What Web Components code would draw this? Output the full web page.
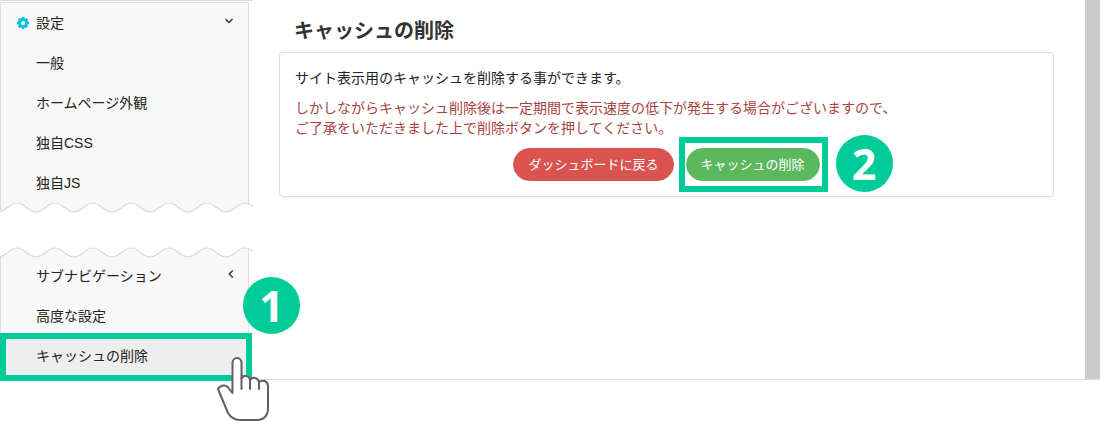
<!DOCTYPE html>
<html lang="ja">
<head>
<meta charset="utf-8">
<meta name="viewport" content="width=device-width, initial-scale=1">
<title>キャッシュの削除</title>
<style>
  body {
    box-sizing: border-box;
    min-height: 100vh;
    margin: 0;
    padding-bottom: 40px;
    background: #fff;
    color: #222;
    font: 14px/20px "Liberation Sans", "Noto Sans CJK JP", sans-serif;
  }
</style>
</head>
<body>
<admin-page>
  <side-nav slot="nav">
    <nav-group edge="bottom">
      <nav-item icon="gear" arrow="down">設定</nav-item>
      <nav-item>一般</nav-item>
      <nav-item>ホームページ外観</nav-item>
      <nav-item>独自CSS</nav-item>
      <nav-item>独自JS</nav-item>
    </nav-group>
    <nav-group edge="top">
      <nav-item arrow="left">サブナビゲーション</nav-item>
      <nav-item>高度な設定</nav-item>
      <nav-item active>キャッシュの削除<step-badge slot="mark">1</step-badge><hand-pointer slot="mark"></hand-pointer></nav-item>
    </nav-group>
  </side-nav>
  <cache-panel heading="キャッシュの削除">
    <span slot="lead">サイト表示用のキャッシュを削除する事ができます。</span>
    <span slot="warning">しかしながらキャッシュ削除後は一定期間で表示速度の低下が発生する場合がございますので、<br>ご了承をいただきました上で削除ボタンを押してください。</span>
    <pill-button slot="actions" kind="danger">ダッシュボードに戻る</pill-button>
    <pill-button slot="actions" kind="success" marked>キャッシュの削除<step-badge slot="mark">2</step-badge></pill-button>
  </cache-panel>
</admin-page>

<script>
class AdminPage extends HTMLElement {
  connectedCallback() {
    const shadowRoot = this.attachShadow({ mode: "open" });

    shadowRoot.innerHTML = `
    <style>
      :host {
        display: flex;
        border-bottom: 1px solid #ddd;
      }
      main {
        flex: 1;
        min-width: 0;
        padding: 21px 31px 20px 26px;
      }
      .scrollbar {
        flex: none;
        width: 15px;
        background: #ccc;
      }
    </style>
    <slot name="nav"></slot>
    <main><slot></slot></main>
    <div class="scrollbar"></div>
    `;
  }
}

customElements.define("admin-page", AdminPage);

class SideNav extends HTMLElement {
  connectedCallback() {
    const shadowRoot = this.attachShadow({ mode: "open" });

    shadowRoot.innerHTML = `
    <style>
      :host {
        display: block;
        flex: none;
        width: 253px;
      }
      nav {
        display: flex;
        flex-direction: column;
        gap: 32px;
        padding-bottom: 3px;
        border-top: 1px solid #ddd;
      }
    </style>
    <nav><slot></slot></nav>
    `;
  }
}

customElements.define("side-nav", SideNav);

class NavGroup extends HTMLElement {
  connectedCallback() {
    const shadowRoot = this.attachShadow({ mode: "open" });

    // one wave every 38px, crest at y=2 and trough at y=11
    let wave = "M-2 11";
    for (let x = -2; x < 260; x += 38) {
      wave += ` C${x + 8} 11 ${x + 11} 2 ${x + 19} 2 S${x + 30} 11 ${x + 38} 11`;
    }
    // the paper side of the torn edge is always white
    const paper = this.getAttribute("edge") === "top" ? "V-2 H-2Z" : "V16 H-2Z";

    shadowRoot.innerHTML = `
    <style>
      :host {
        display: flex;
        flex-direction: column;
      }
      .list {
        box-sizing: border-box;
        width: 249px;
        background: #f8f8f8;
        border: solid #ddd;
        border-width: 0 1px;
      }
      :host([edge="bottom"]) .list {
        margin-top: 1px;
        border-top-width: 1px;
        padding-bottom: 8px;
      }
      :host([edge="top"]) .list {
        order: 1;
        margin-top: -11px;
        padding-top: 8px;
      }
      svg {
        display: block;
        position: relative;
        width: 100%;
        height: 13px;
      }
      :host([edge="bottom"]) svg {
        margin-top: -10px;
      }
      .line {
        fill: none;
        stroke: #d8d8d8;
        stroke-width: 1.2;
      }
    </style>
    <div class="list"><slot></slot></div>
    <svg aria-hidden="true">
      <path fill="#fff" d="${wave} ${paper}"/>
      <path class="line" d="${wave}"/>
    </svg>
    `;
  }
}

customElements.define("nav-group", NavGroup);

const gear = `
  <svg class="gear" width="12" height="12" viewBox="-6 -6 12 12" aria-hidden="true">
    <g fill="#0bc0e0">
      <rect x="-1.4" y="-6" width="2.8" height="12" rx=".4"/>
      <rect x="-1.4" y="-6" width="2.8" height="12" rx=".4" transform="rotate(45)"/>
      <rect x="-1.4" y="-6" width="2.8" height="12" rx=".4" transform="rotate(90)"/>
      <rect x="-1.4" y="-6" width="2.8" height="12" rx=".4" transform="rotate(135)"/>
      <circle r="4.8"/>
    </g>
    <circle r="2" fill="#f8f8f8"/>
  </svg>`;

const arrows = {
  down: `<svg class="arrow" width="10" height="10" viewBox="0 0 10 10" aria-hidden="true"><path d="M1.5 3 5 6.5 8.5 3"/></svg>`,
  left: `<svg class="arrow" width="6" height="10" viewBox="0 0 6 10" aria-hidden="true"><path d="M4.8 1.5 1.3 5 4.8 8.5"/></svg>`
};

class NavItem extends HTMLElement {
  connectedCallback() {
    const shadowRoot = this.attachShadow({ mode: "open" });
    const icon = this.getAttribute("icon") ? gear : "";
    const arrow = arrows[this.getAttribute("arrow")] || "";

    shadowRoot.innerHTML = `
    <style>
      :host {
        display: block;
        position: relative;
      }
      a {
        display: grid;
        grid-template-columns: 12px 1fr auto;
        column-gap: 7px;
        align-items: center;
        padding: 10px 14px 10px 16px;
        color: inherit;
        text-decoration: none;
      }
      :host([active]) a {
        background: #eee;
      }
      .label {
        grid-column: 2;
      }
      .arrow {
        fill: none;
        stroke: #333;
        stroke-width: 1.4;
        margin-bottom: 5px;
      }
      .gear {
        grid-row: 1;
      }
      .frame {
        display: none;
        position: absolute;
        inset: -3px -4px -5px -1px;
        border: 6px solid #00cc99;
        pointer-events: none;
      }
      :host([active]) .frame {
        display: block;
      }
      ::slotted(step-badge) {
        position: absolute;
        left: 242px;
        top: -59px;
      }
      ::slotted(hand-pointer) {
        position: absolute;
        left: 215px;
        top: 19px;
      }
    </style>
    <a href="#">${icon}<span class="label"><slot></slot></span>${arrow}</a>
    <div class="frame"></div>
    <slot name="mark"></slot>
    `;
  }
}

customElements.define("nav-item", NavItem);

class StepBadge extends HTMLElement {
  connectedCallback() {
    const shadowRoot = this.attachShadow({ mode: "open" });

    shadowRoot.innerHTML = `
    <style>
      :host {
        display: flex;
        align-items: center;
        justify-content: center;
        width: 57px;
        height: 57px;
        border-radius: 50%;
        background: #00cc99;
        color: #fff;
        font: bold 43px/57px "Open Sans", sans-serif;
      }
    </style>
    <slot></slot>
    `;
  }
}

customElements.define("step-badge", StepBadge);

class HandPointer extends HTMLElement {
  connectedCallback() {
    const shadowRoot = this.attachShadow({ mode: "open" });

    shadowRoot.innerHTML = `
    <style>
      :host {
        display: block;
      }
      svg {
        display: block;
      }
    </style>
    <svg width="54" height="66" viewBox="0 0 54 66" fill="#fff" stroke="#606060" stroke-width="2" stroke-linejoin="round" stroke-linecap="round" aria-hidden="true">
      <path d="M16.500 38V8a4.500 5 0 0 1 9 0V23.500C27 20 33.500 20 34 25.500C36 21.500 42 22 43 27.500C46 24 52 26 52 31V54C52 60 48 65 41 65H24C18 65 15 63 12 58L2 34C4 30 10 29 12.500 33Z"/>
      <path fill="none" d="M25.500 23V34M34 25V34M43 27V34"/>
    </svg>
    `;
  }
}

customElements.define("hand-pointer", HandPointer);

class CachePanel extends HTMLElement {
  connectedCallback() {
    const shadowRoot = this.attachShadow({ mode: "open" });

    shadowRoot.innerHTML = `
    <style>
      :host {
        display: block;
      }
      h1 {
        margin: 0 0 11px;
        padding-left: 15px;
        font-size: 20px;
        line-height: 20px;
        color: #333;
      }
      section {
        padding: 15px;
        border: 1px solid #ddd;
        border-radius: 4px;
        box-shadow: 0 1px 1px rgba(0, 0, 0, .05);
      }
      p {
        margin: 0 0 10px;
      }
      .warning {
        color: #a94442;
      }
      .actions {
        display: flex;
        justify-content: center;
        gap: 12px;
      }
    </style>
    <h1>${this.getAttribute("heading")}</h1>
    <section>
      <p><slot name="lead"></slot></p>
      <p class="warning"><slot name="warning"></slot></p>
      <div class="actions"><slot name="actions"></slot></div>
    </section>
    `;
  }
}

customElements.define("cache-panel", CachePanel);

class PillButton extends HTMLElement {
  connectedCallback() {
    const shadowRoot = this.attachShadow({ mode: "open" });

    shadowRoot.innerHTML = `
    <style>
      :host {
        display: block;
        position: relative;
      }
      button {
        display: block;
        padding: 6px 14px;
        border: 1px solid #d9534f;
        border-radius: 17px;
        background: #d9534f;
        color: #fff;
        font: inherit;
        font-size: 13px;
        line-height: 19px;
        white-space: nowrap;
      }
      :host([kind="success"]) button {
        border-color: #5cb85c;
        background: #5cb85c;
      }
      .frame {
        display: none;
        position: absolute;
        inset: -11px -8px -11px -7px;
        border: 6px solid #00cc99;
        pointer-events: none;
      }
      :host([marked]) .frame {
        display: block;
      }
      ::slotted(step-badge) {
        position: absolute;
        left: 150px;
        top: -13px;
      }
    </style>
    <button type="button"><slot></slot></button>
    <div class="frame"></div>
    <slot name="mark"></slot>
    `;
  }
}

customElements.define("pill-button", PillButton);
</script>
</body>
</html>
